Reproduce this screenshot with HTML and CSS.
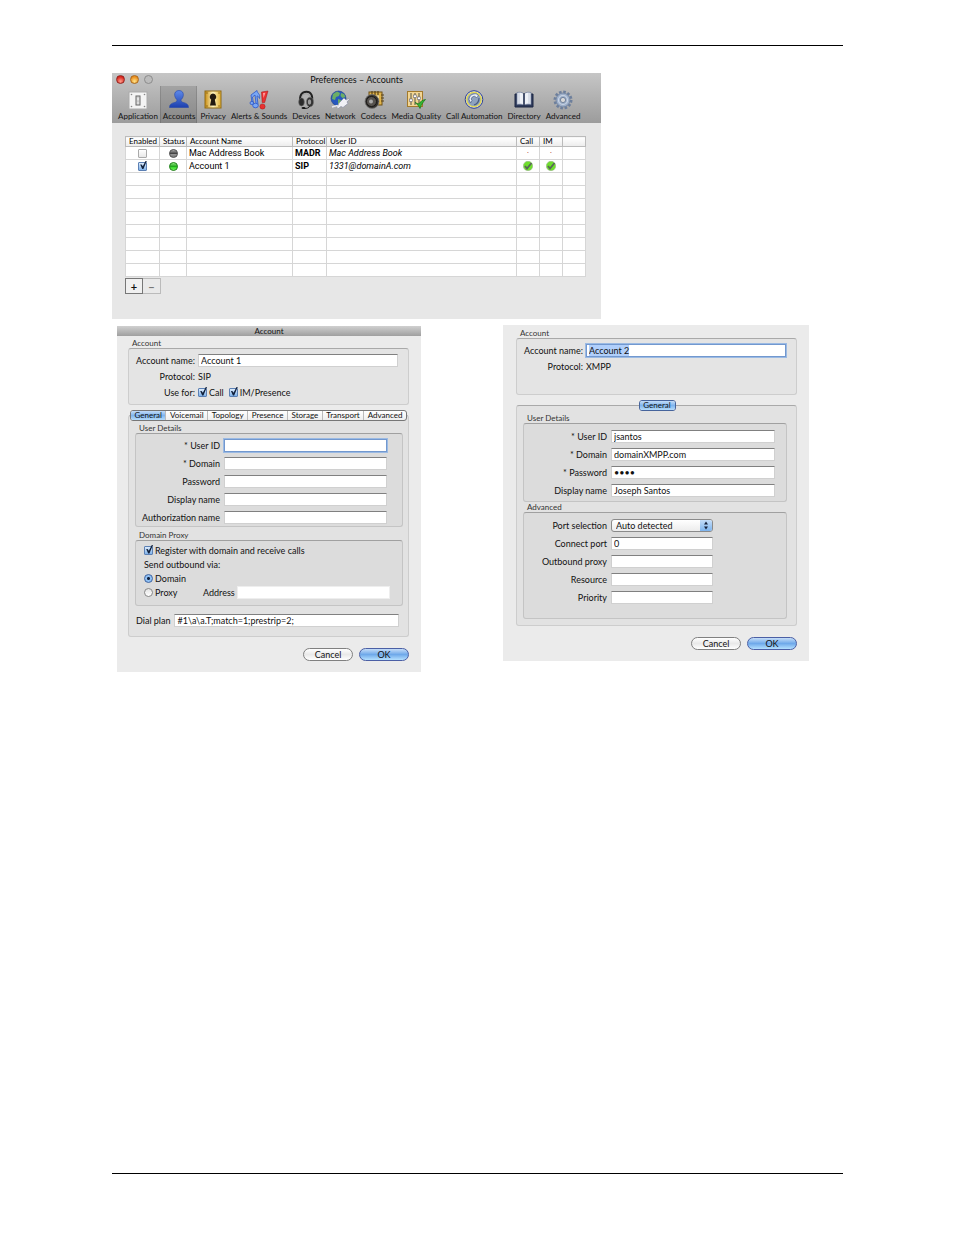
FILE: index.html
```html
<!DOCTYPE html>
<html lang="en">
<head>
    <meta charset="UTF-8">
    <meta name="viewport" content="width=device-width, initial-scale=1.0">
    <title>Preferences – Accounts</title>
    <link rel="stylesheet" href="styles.css">
</head>
<body>
<main class="page">
    <section class="prefs">
        <header class="prefs-head">
            <div class="titlebar">
                <span class="lights">
                    <i class="light red"></i><i class="light yellow"></i><i class="light off"></i>
                </span>
                <h1>Preferences – Accounts</h1>
            </div>
            <nav class="toolbar">
                <button type="button" class="tool">
                    <svg viewBox="0 0 20 20"><rect x="1" y="2" width="18" height="17" fill="#f4f4f4" stroke="#aaa"/><rect x="8" y="6" width="4" height="9" fill="#ddd" stroke="#666"/><rect x="9" y="7" width="2" height="4" fill="#fff" stroke="#999" stroke-width=".5"/><g fill="#888"><circle cx="3.5" cy="4.5" r=".8"/><circle cx="16.5" cy="4.5" r=".8"/><circle cx="3.5" cy="16.5" r=".8"/><circle cx="16.5" cy="16.5" r=".8"/></g></svg>
                    Application
                </button>
                <button type="button" class="tool active">
                    <svg viewBox="0 0 20 20"><defs><linearGradient id="blue" x1="0" y1="0" x2="0" y2="1"><stop offset="0" stop-color="#5f8aea"/><stop offset="1" stop-color="#1c3fae"/></linearGradient></defs><path d="M10 .5c3.200 0 4.700 2.300 4.300 5-.3 2-1.300 3.300-2.300 4.300 0 1.500.6 2.200 2.200 2.600 3.400.9 5.300 2 5.300 5.100H.5c0-3.100 1.900-4.200 5.300-5.100 1.600-.4 2.200-1.100 2.200-2.600-1-1-2-2.300-2.300-4.300C5.300 2.800 6.800.5 10 .5z" fill="url(#blue)" stroke="#2748a8" stroke-width=".6"/></svg>
                    Accounts
                </button>
                <button type="button" class="tool">
                    <svg viewBox="0 0 20 20"><defs><linearGradient id="gold" x1="0" y1="0" x2="1" y2="0"><stop offset="0" stop-color="#c98d12"/><stop offset=".5" stop-color="#fff6c4"/><stop offset="1" stop-color="#e0ae30"/></linearGradient></defs><rect x="2" y="1" width="16" height="17" fill="url(#gold)" stroke="#8f6a17"/><path d="M10 3.500a3.400 3.400 0 0 1 1.800 6.200L13 15.500H7l1.200-5.800A3.400 3.400 0 0 1 10 3.500z" fill="#221a10"/><g fill="#7d5a10"><circle cx="4" cy="3" r=".7"/><circle cx="16" cy="3" r=".7"/><circle cx="4" cy="16" r=".7"/><circle cx="16" cy="16" r=".7"/></g></svg>
                    Privacy
                </button>
                <button type="button" class="tool">
                    <svg viewBox="0 0 20 20"><g fill="#79a7f5" stroke="#2c57c8" stroke-width=".8"><path d="M2 5l6-4.500c.5 3.500 3.500 3 2.500 8C9.500 6.500 9 6 8 6l1 8.500H7.200L6 5 3.500 7l.8 6H3z"/><ellipse cx="6.500" cy="15.500" rx="2.800" ry="2.300"/><ellipse cx="2.800" cy="13" rx="1.800" ry="1.600"/></g><path d="M12.500 2L19 1l-3.300 11.500h-2.500z" fill="#e93232" stroke="#a81414" stroke-width=".5"/><circle cx="13.500" cy="16.500" r="2.600" fill="#e93232" stroke="#a81414" stroke-width=".5"/><path d="M14 3l2.500-.3-2 5.300z" fill="#ff9c9c"/></svg>
                    Alerts &amp; Sounds
                </button>
                <button type="button" class="tool">
                    <svg viewBox="0 0 20 20"><path d="M4.500 12C3 5 6 1.800 10.500 1.800S17.500 6 15.500 12" fill="none" stroke="#222" stroke-width="2"/><path d="M6 11C5 6 7 3.800 10 3.800s5 3 4 7" fill="none" stroke="#999" stroke-width=".8"/><ellipse cx="5.500" cy="12" rx="2.800" ry="4" fill="#2b2b2b" stroke="#666" stroke-width=".6"/><ellipse cx="14" cy="12" rx="3.600" ry="4.800" fill="#333" stroke="#777" stroke-width=".6"/><ellipse cx="13.500" cy="12" rx="1.700" ry="2.700" fill="#999"/><path d="M14 16c-1 2-3 2.500-6 2.500" fill="none" stroke="#222"/><ellipse cx="7.500" cy="18" rx="2" ry="1" fill="#111"/></svg>
                    Devices
                </button>
                <button type="button" class="tool">
                    <svg viewBox="0 0 20 20"><circle cx="8.500" cy="8.500" r="7.500" fill="#2758bd" stroke="#173b85" stroke-width=".6"/><path d="M3 4l4-2.500 3 1.500-1 3-3 1-1 3-3-1zM11 3l3 1 1.500 3-3 1-2-2zM8 9l3 1-1 4-2 1.500z" fill="#6cae64"/><path d="M9 13l5-5 2 2 2.500-1.500.8.8L17 12l1 1.500-5 4-2-1-3 2-1-1z" fill="#f1f1f6" stroke="#8d91a5" stroke-width=".7"/><path d="M2 17l5-1.500 2 2" fill="none" stroke="#e8e8ef" stroke-width="1.400"/></svg>
                    Network
                </button>
                <button type="button" class="tool">
                    <svg viewBox="0 0 20 20"><rect x="5" y="2" width="13" height="13" fill="#e1b54c" stroke="#6e5015"/><path d="M8 1v5M11 1v5M14 1v5M17 5h3M17 8h3M17 11h3" stroke="#5b4317" stroke-width="1.200"/><path d="M8 5v8M11 5v8M14 5v8" stroke="#fff5ce" stroke-width="1.200"/><circle cx="8" cy="11.500" r="7" fill="#35322f" stroke="#777" stroke-width=".8"/><circle cx="7.500" cy="11.500" r="5" fill="#57534f" stroke="#191817"/><circle cx="7" cy="11.500" r="2" fill="#aaa"/></svg>
                    Codecs
                </button>
                <button type="button" class="tool">
                    <svg viewBox="0 0 20 20"><rect x="1.500" y="1.500" width="15" height="15" fill="#f2d593" stroke="#a37a2c"/><path d="M5 3v12M9 3v12M13 3v12" stroke="#554"/><g fill="#fff" stroke="#667" stroke-width=".6"><rect x="3.500" y="9" width="3" height="2.500"/><rect x="7.500" y="5" width="3" height="2.500"/><rect x="11.500" y="7" width="3" height="2.500"/></g><path d="M9 12.500l3.500 1.500c2-2.500 4-4 7-4.500-2.500 2.500-4 5-5.500 9-1.500-3-3-4.500-5-6z" fill="#35b735" stroke="#147314" stroke-width=".7"/></svg>
                    Media Quality
                </button>
                <button type="button" class="tool">
                    <svg viewBox="0 0 20 20"><circle cx="10" cy="9.500" r="8.800" fill="#d9dfec" stroke="#2c3f94"/><circle cx="10" cy="9.500" r="7.200" fill="#8ea2bf" stroke="#e6d94c" stroke-width="1.300"/><path d="M5 9.500C5 5.500 9 3 13 4l1.500 2-2 1.500-2-1.200C8.500 6.500 7.500 7.500 7.200 9l.8 1.500-1.500 2.500z" fill="#e9eef7" stroke="#4a5d82" stroke-width=".7"/><path d="M15 8c0 4-2 6-5 7" fill="none" stroke="#4a5d82" stroke-width="1.200"/></svg>
                    Call Automation
                </button>
                <button type="button" class="tool">
                    <svg viewBox="0 0 20 20"><path d="M1 4h18v13H1z" fill="#2e3a5b" stroke="#1d2743"/><path d="M3 2.500c3-.5 5-.3 6.500 1V15C8 14 5.500 14 3 14.500zM17 2.500c-3-.5-5-.3-6.500 1V15c1.500-1 4-1 6.500-.5z" fill="#edf0f6" stroke="#6c7897" stroke-width=".7"/><path d="M5 3v11M15 3v11" stroke="#b6bfd2" stroke-width=".8"/><path d="M10 3v13" stroke="#1d2743"/></svg>
                    Directory
                </button>
                <button type="button" class="tool">
                    <svg viewBox="0 0 20 20"><circle cx="10" cy="10" r="8" fill="none" stroke="#6d7f9c" stroke-width="3" stroke-dasharray="2.500 1.690"/><circle cx="10" cy="10" r="7" fill="#9dafc9" stroke="#6d7f9c" stroke-width=".8"/><circle cx="10" cy="10" r="4.500" fill="none" stroke="#cad5e5" stroke-width="1.200"/><circle cx="10" cy="10" r="2.600" fill="#d8d8d8" stroke="#60728f" stroke-width=".8"/></svg>
                    Advanced
                </button>
            </nav>
        </header>
        <div class="prefs-body">
            <table class="accounts">
                <colgroup>
                    <col class="c-enabled"><col class="c-status"><col class="c-name"><col class="c-protocol"><col><col class="c-small"><col class="c-small"><col class="c-small">
                </colgroup>
                <thead>
                    <tr><th>Enabled</th><th>Status</th><th>Account Name</th><th>Protocol</th><th>User ID</th><th>Call</th><th>IM</th><th></th></tr>
                </thead>
                <tbody>
                    <tr>
                        <td class="mid"><input type="checkbox" class="check" aria-label="Enable Mac Address Book"></td>
                        <td class="mid"><i class="status"></i></td>
                        <td>Mac Address Book</td><td><b>MADR</b></td><td><em>Mac Address Book</em></td>
                        <td class="mid dot">·</td><td class="mid dot">·</td><td></td>
                    </tr>
                    <tr>
                        <td class="mid"><input type="checkbox" class="check" aria-label="Enable Account 1" checked></td>
                        <td class="mid"><i class="status on"></i></td>
                        <td>Account 1</td><td><b>SIP</b></td><td><em>1331@domainA.com</em></td>
                        <td class="mid"><svg class="ok-mark" viewBox="0 0 10 10"><circle cx="5" cy="5" r="4.700" fill="#6fe02c" stroke="#9ab48c" stroke-width=".6"/><path d="M2 5l2 2.500L8.500 2" fill="none" stroke="#59665a" stroke-width="1.800"/></svg></td>
                        <td class="mid"><svg class="ok-mark" viewBox="0 0 10 10"><circle cx="5" cy="5" r="4.700" fill="#6fe02c" stroke="#9ab48c" stroke-width=".6"/><path d="M2 5l2 2.500L8.500 2" fill="none" stroke="#59665a" stroke-width="1.800"/></svg></td>
                        <td></td>
                    </tr>
                    <tr><td></td><td></td><td></td><td></td><td></td><td></td><td></td><td></td></tr>
                    <tr><td></td><td></td><td></td><td></td><td></td><td></td><td></td><td></td></tr>
                    <tr><td></td><td></td><td></td><td></td><td></td><td></td><td></td><td></td></tr>
                    <tr><td></td><td></td><td></td><td></td><td></td><td></td><td></td><td></td></tr>
                    <tr><td></td><td></td><td></td><td></td><td></td><td></td><td></td><td></td></tr>
                    <tr><td></td><td></td><td></td><td></td><td></td><td></td><td></td><td></td></tr>
                    <tr><td></td><td></td><td></td><td></td><td></td><td></td><td></td><td></td></tr>
                    <tr><td></td><td></td><td></td><td></td><td></td><td></td><td></td><td></td></tr>
                </tbody>
            </table>
            <div class="add-remove">
                <button type="button" aria-label="Add account">+</button><button type="button" aria-label="Remove account" disabled>−</button>
            </div>
        </div>
    </section>

    <div class="dialogs">
        <form class="dialog sip">
            <h2 class="dialog-title">Account</h2>
            <div class="dialog-body">
                <h3 class="caption">Account</h3>
                <div class="group account-group">
                    <label for="name1">Account name:</label><input type="text" class="field" id="name1" value="Account 1">
                    <span class="label">Protocol:</span><span>SIP</span>
                    <span class="label">Use for:</span>
                    <span class="choices">
                        <label><input type="checkbox" class="check" checked>Call</label>
                        <label><input type="checkbox" class="check" checked>IM/Presence</label>
                    </span>
                </div>
                <div class="tab-box">
                    <div class="tabs" role="tablist">
                        <button type="button" role="tab" class="tab selected" aria-selected="true">General</button>
                        <button type="button" role="tab" class="tab">Voicemail</button>
                        <button type="button" role="tab" class="tab">Topology</button>
                        <button type="button" role="tab" class="tab">Presence</button>
                        <button type="button" role="tab" class="tab">Storage</button>
                        <button type="button" role="tab" class="tab">Transport</button>
                        <button type="button" role="tab" class="tab">Advanced</button>
                    </div>
                    <h3 class="caption">User Details</h3>
                    <div class="group inner details">
                        <label for="user1">* User ID</label><input type="text" class="field focused" id="user1">
                        <label for="domain1">* Domain</label><input type="text" class="field" id="domain1">
                        <label for="pass1">Password</label><input type="password" class="field" id="pass1">
                        <label for="display1">Display name</label><input type="text" class="field" id="display1">
                        <label for="auth1">Authorization name</label><input type="text" class="field" id="auth1">
                    </div>
                    <h3 class="caption">Domain Proxy</h3>
                    <div class="group inner proxy">
                        <label><input type="checkbox" class="check" checked>Register with domain and receive calls</label>
                        <span>Send outbound via:</span>
                        <label><input type="radio" class="radio" name="via" checked>Domain</label>
                        <div class="proxy-row">
                            <label><input type="radio" class="radio" name="via">Proxy</label>
                            <label for="address">Address</label>
                            <input type="text" class="field flat" id="address">
                        </div>
                    </div>
                    <div class="dial">
                        <label for="dial">Dial plan</label>
                        <input type="text" class="field" id="dial" value="#1\a\a.T;match=1;prestrip=2;">
                    </div>
                </div>
                <div class="actions">
                    <button type="button" class="push">Cancel</button>
                    <button type="button" class="push primary">OK</button>
                </div>
            </div>
        </form>

        <form class="dialog xmpp">
            <div class="dialog-body">
                <h3 class="caption">Account</h3>
                <div class="group account-group">
                    <label for="name2">Account name:</label><input type="text" class="field focused" id="name2" value="Account 2">
                    <span class="label">Protocol:</span><span>XMPP</span>
                </div>
                <div class="tab-box">
                    <div class="tabs single" role="tablist">
                        <button type="button" role="tab" class="tab selected" aria-selected="true">General</button>
                    </div>
                    <h3 class="caption">User Details</h3>
                    <div class="group inner details">
                        <label for="user2">* User ID</label><input type="text" class="field" id="user2" value="jsantos">
                        <label for="domain2">* Domain</label><input type="text" class="field" id="domain2" value="domainXMPP.com">
                        <label for="pass2">* Password</label><input type="password" class="field" id="pass2" value="1234">
                        <label for="display2">Display name</label><input type="text" class="field" id="display2" value="Joseph Santos">
                    </div>
                    <h3 class="caption">Advanced</h3>
                    <div class="group inner details advanced">
                        <label for="port-mode">Port selection</label>
                        <span class="select">
                            <select id="port-mode"><option>Auto detected</option></select>
                            <svg viewBox="0 0 12 11"><path d="M6 1.500L8 4.500H4zM6 9.500L4 6.500h4z" fill="#16223c"/></svg>
                        </span>
                        <label for="port">Connect port</label><input type="text" class="field" id="port" value="0">
                        <label for="outbound">Outbound proxy</label><input type="text" class="field" id="outbound">
                        <label for="resource">Resource</label><input type="text" class="field" id="resource">
                        <label for="priority">Priority</label><input type="text" class="field" id="priority">
                    </div>
                </div>
                <div class="actions">
                    <button type="button" class="push">Cancel</button>
                    <button type="button" class="push primary">OK</button>
                </div>
            </div>
        </form>
    </div>
</main>
<script>
    // Start with the account name ready to be typed over
    const nameField = document.getElementById('name2');
    nameField.focus();
    nameField.select();
</script>
</body>
</html>
```
FILE: styles.css
```css
* {
    box-sizing: border-box;
}
body {
    margin: 0;
    min-height: 100vh;
    display: flex;
    padding: 45px 111px 61px 112px;
    background: #fff;
    color: #111;
    font: 9px/13px Lato, sans-serif;
}
button, input, select {
    font: inherit;
    color: inherit;
}
h1, h2, h3 {
    margin: 0;
    font-weight: normal;
}
.page {
    flex: 1;
    min-width: 0;
    border-top: 1px solid #000;
    border-bottom: 1px solid #000;
    padding-top: 27px;
}

/* Preferences window */
.prefs {
    max-width: 489px;
    background: #e7e7e7;
}
.prefs-head {
    background: linear-gradient(#c6c6c6, #9c9c9c);
}
.titlebar {
    display: grid;
    grid-template-columns: 40px 1fr 40px;
    align-items: center;
    height: 13px;
    padding: 0 4px;
}
.titlebar h1 {
    font-size: 9px;
    line-height: 13px;
    text-align: center;
}
.lights {
    display: flex;
    gap: 5px;
}
.light {
    width: 9px;
    height: 9px;
    border-radius: 50%;
    border: 1px solid #8c8c8c;
}
.red {
    background: radial-gradient(circle at 50% 75%, #ff9d8c, #d8251c 70%);
    border-color: #93241f;
}
.yellow {
    background: radial-gradient(circle at 50% 75%, #ffe48a, #ea8d1c 70%);
    border-color: #a9691c;
}
.off {
    background: #bcbcbc;
}
.toolbar {
    display: flex;
    padding-left: 3px;
    height: 37px;
}
.tool {
    display: flex;
    flex-direction: column;
    align-items: center;
    gap: 1px;
    padding: 4px 2px 0 3px;
    border: 0;
    background: none;
    font-size: 8px;
    line-height: 11px;
    white-space: nowrap;
}
.tool svg {
    width: 20px;
    height: 20px;
}
.tool.active {
    background: rgba(0, 0, 0, 0.13);
    box-shadow: inset 1px 0 rgba(0, 0, 0, 0.12), inset -1px 0 rgba(0, 0, 0, 0.12);
}
.prefs-body {
    padding: 13px 15px 25px 13px;
}
.accounts {
    width: 100%;
    table-layout: fixed;
    border-collapse: collapse;
    background: #fff;
    border: 1px solid #b4b4b4;
    font: 9px/10px Roboto, sans-serif;
    color: #000;
}
.c-enabled, .c-protocol { width: 34px; }
.c-status { width: 27px; }
.c-name { width: 106px; }
.c-small { width: 23px; }
.accounts th {
    height: 10px;
    padding: 0 0 0 3px;
    font: 8px/9px Lato, sans-serif;
    text-align: left;
    white-space: nowrap;
    background: linear-gradient(#fff, #ececec);
    border: 1px solid #bbb;
}
.accounts td {
    height: 13px;
    padding: 0 0 0 2px;
    border: 1px solid #d6d6d6;
    white-space: nowrap;
}
.accounts .mid {
    padding: 0;
    text-align: center;
}
.accounts .mid > * {
    display: block;
    margin: 0 auto;
}
.accounts .dot {
    color: #a22;
}
.status {
    width: 9px;
    height: 9px;
    border-radius: 50%;
    border: 1px solid #555;
    background: linear-gradient(#aaa, #444 50%, #999 55%, #777);
}
.status.on {
    border-color: #268020;
    background: linear-gradient(#8be67c, #23a81c 50%, #33d827 55%, #6ef05a);
}
.ok-mark {
    width: 10px;
    height: 10px;
}
.add-remove {
    display: flex;
    margin-top: 1px;
}
.add-remove button {
    width: 18px;
    height: 16px;
    padding: 0;
    border: 1px solid #777;
    background: #f0f0f0;
    font: bold 11px/13px Lato, sans-serif;
}
.add-remove button:disabled {
    border-color: #bbb;
    border-left: 0;
    background: #e9e9e9;
    color: #777;
}

/* Account dialogs */
.dialogs {
    display: grid;
    grid-template-columns: 304px 306px;
    column-gap: 82px;
    align-items: start;
    padding: 6px 0 0 5px;
}
.dialog {
    background: #ebebeb;
}
.sip {
    margin-top: 1px;
}
.dialog-title {
    background: linear-gradient(#d0d0d0, #9f9f9f);
    font-size: 8px;
    line-height: 10px;
    text-align: center;
}
.dialog-body {
    padding: 2px 12px 11px 11px;
}
.caption {
    padding-left: 4px;
    font-size: 8px;
    line-height: 10px;
    color: #333;
}
.group {
    border: 1px solid #cdcdcd;
    border-top-color: #a9a9a9;
    border-radius: 3px;
    background: #e4e4e4;
}
.inner {
    background: #dcdcdc;
    border-color: #c4c4c4;
    border-top-color: #a0a0a0;
}
.account-group {
    display: grid;
    grid-template-columns: 66px 1fr;
    grid-auto-rows: 13px;
    gap: 3px 3px;
    align-content: start;
    height: 57px;
    padding: 5px 10px 0 0;
}
.account-group > label, .label {
    text-align: right;
}
.field {
    appearance: none;
    width: 100%;
    height: 13px;
    min-width: 0;
    margin: 0;
    padding: 0 2px;
    border: 1px solid #d0d0d0;
    border-top-color: #808080;
    border-radius: 0;
    background: #fff;
    outline: 0;
    line-height: 11px;
}
.field::selection {
    background: #b0cffb;
    color: #111;
}
.flat {
    border-color: #eee;
}
.focused {
    border-color: #7298cf;
    box-shadow: 0 0 0 1px #9bbae3;
}
.choices, .choices label, .proxy label {
    display: flex;
    align-items: center;
    gap: 2px;
}
.choices {
    gap: 5px;
}
.check {
    appearance: none;
    position: relative;
    width: 9px;
    height: 9px;
    margin: 0;
    border: 1px solid #aaa;
    border-radius: 1px;
    background: linear-gradient(#fff, #e8e8e8);
}
.check:checked {
    border-color: #5c80b4;
    background: linear-gradient(#dcebfb, #7fb2ea);
}
.check:checked::after {
    content: "";
    position: absolute;
    inset: -2px -1px 0 0;
    background: #10203c;
    clip-path: polygon(15% 45%, 32% 45%, 48% 65%, 85% 0, 100% 0, 55% 95%, 40% 95%);
}
.radio {
    appearance: none;
    width: 9px;
    height: 9px;
    margin: 0;
    border: 1px solid #888;
    border-radius: 50%;
    background: linear-gradient(#e4e4e4, #fff);
}
.radio:checked {
    border-color: #3c62a0;
    background: radial-gradient(circle, #10203c 0 1px, #8fc0f3 2px);
}
.tab-box {
    margin-top: 10px;
    padding: 0 5px 9px 6px;
    border: 1px solid #cdcdcd;
    border-top-color: #a9a9a9;
    border-radius: 3px;
    background: #e2e2e2;
}
.tabs {
    display: flex;
    height: 11px;
    margin: -6px -4px 2px -5px;
    border: 1px solid #777;
    border-radius: 3px;
    overflow: hidden;
    background: linear-gradient(#fff, #eee);
}
.tab {
    flex: 1 1 auto;
    padding: 0;
    border: 0;
    border-right: 1px solid #bbb;
    background: none;
    font-size: 8px;
    line-height: 9px;
}
.tab:last-child {
    border-right: 0;
}
.tab.selected {
    background: linear-gradient(#c3dcf8, #7fb5ee 50%, #b4dbfb);
}
.tabs.single {
    width: 37px;
    margin: -6px auto 2px;
    border-color: #46649c;
}
.details {
    display: grid;
    grid-template-columns: 84px 1fr;
    grid-auto-rows: 13px;
    gap: 5px 4px;
    padding: 5px 15px 2px 0;
    text-align: right;
}
.sip .details {
    margin-bottom: 3px;
}
.proxy {
    display: grid;
    grid-auto-rows: 13px;
    row-gap: 1px;
    padding: 3px 12px 6px 8px;
}
.proxy-row {
    display: grid;
    grid-template-columns: 55px 30px 1fr;
    column-gap: 4px;
}
.dial {
    display: flex;
    gap: 4px;
    padding: 8px 4px 0 1px;
}
.dial label {
    white-space: nowrap;
}
.actions {
    display: flex;
    justify-content: flex-end;
    gap: 6px;
    margin-top: 11px;
}
.push {
    width: 50px;
    height: 13px;
    padding: 0;
    border: 1px solid #808080;
    border-radius: 7px;
    background: linear-gradient(#fff, #e9e9e9 50%, #fff);
    line-height: 11px;
}
.push.primary {
    border-color: #4b5fa5;
    background: linear-gradient(#c5ddf8, #6fa9ea 50%, #b4e0ff);
}
.xmpp .dialog-body {
    padding: 3px 12px 11px 13px;
}
.xmpp .tab-box {
    padding-bottom: 6px;
}
.xmpp .inner {
    margin-right: 4px;
}
.xmpp .details {
    grid-template-columns: 83px 1fr;
    padding: 6px 11px 4px 0;
}
.xmpp .advanced {
    grid-template-columns: 83px 102px;
    padding-bottom: 14px;
}
.select {
    display: flex;
    position: relative;
}
.select select {
    appearance: none;
    width: 100%;
    height: 13px;
    padding: 0 14px 0 4px;
    border: 1px solid #8a8a8a;
    border-radius: 3px;
    background: linear-gradient(#fff, #ececec);
    line-height: 11px;
}
.select svg {
    position: absolute;
    top: 1px;
    right: 1px;
    width: 12px;
    height: 11px;
    border-radius: 0 2px 2px 0;
    background: linear-gradient(#c5ddf8, #7db4ee);
    pointer-events: none;
}
```
